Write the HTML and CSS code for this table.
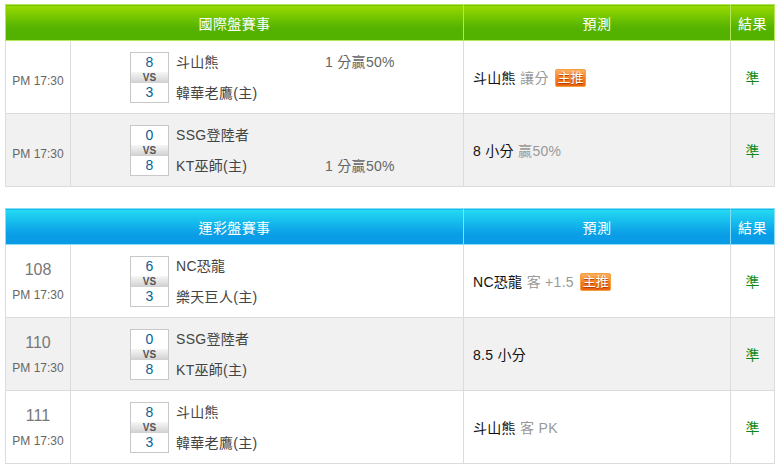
FILE: index.html
```html
<!DOCTYPE html>
<html lang="zh-Hant">
<head>
<meta charset="utf-8">
<title>賽事預測</title>
<link rel="stylesheet" href="styles.css">
</head>
<body>
<table class="board green">
  <colgroup><col class="c1"><col class="c2"><col class="c3"><col class="c4"></colgroup>
  <thead>
    <tr><th colspan="2">國際盤賽事</th><th>預測</th><th>結果</th></tr>
  </thead>
  <tbody>
    <tr>
      <td class="time"><div class="t">PM 17:30</div></td>
      <td class="match">
        <div class="mi">
          <div class="box"><div class="sc">8</div><div class="vs">VS</div><div class="sc">3</div></div>
          <div class="teams">
            <div class="line"><span class="team">斗山熊</span><span class="odds">1 分贏50%</span></div>
            <div class="line"><span class="team">韓華老鷹(主)</span><span class="odds"></span></div>
          </div>
        </div>
      </td>
      <td class="pred">斗山熊 <span class="g">讓分</span> <span class="badge">主推</span></td>
      <td class="res">準</td>
    </tr>
    <tr class="alt">
      <td class="time"><div class="t">PM 17:30</div></td>
      <td class="match">
        <div class="mi">
          <div class="box"><div class="sc">0</div><div class="vs">VS</div><div class="sc">8</div></div>
          <div class="teams">
            <div class="line"><span class="team">SSG登陸者</span><span class="odds"></span></div>
            <div class="line"><span class="team">KT巫師(主)</span><span class="odds">1 分贏50%</span></div>
          </div>
        </div>
      </td>
      <td class="pred">8 小分 <span class="g">贏50%</span></td>
      <td class="res">準</td>
    </tr>
  </tbody>
</table>

<table class="board blue">
  <colgroup><col class="c1"><col class="c2"><col class="c3"><col class="c4"></colgroup>
  <thead>
    <tr><th colspan="2">運彩盤賽事</th><th>預測</th><th>結果</th></tr>
  </thead>
  <tbody>
    <tr>
      <td class="time"><div class="num">108</div><div class="t">PM 17:30</div></td>
      <td class="match">
        <div class="mi">
          <div class="box"><div class="sc">6</div><div class="vs">VS</div><div class="sc">3</div></div>
          <div class="teams">
            <div class="line"><span class="team">NC恐龍</span><span class="odds"></span></div>
            <div class="line"><span class="team">樂天巨人(主)</span><span class="odds"></span></div>
          </div>
        </div>
      </td>
      <td class="pred">NC恐龍 <span class="g">客 +1.5</span> <span class="badge">主推</span></td>
      <td class="res">準</td>
    </tr>
    <tr class="alt">
      <td class="time"><div class="num">110</div><div class="t">PM 17:30</div></td>
      <td class="match">
        <div class="mi">
          <div class="box"><div class="sc">0</div><div class="vs">VS</div><div class="sc">8</div></div>
          <div class="teams">
            <div class="line"><span class="team">SSG登陸者</span><span class="odds"></span></div>
            <div class="line"><span class="team">KT巫師(主)</span><span class="odds"></span></div>
          </div>
        </div>
      </td>
      <td class="pred">8.5 小分</td>
      <td class="res">準</td>
    </tr>
    <tr>
      <td class="time"><div class="num">111</div><div class="t">PM 17:30</div></td>
      <td class="match">
        <div class="mi">
          <div class="box"><div class="sc">8</div><div class="vs">VS</div><div class="sc">3</div></div>
          <div class="teams">
            <div class="line"><span class="team">斗山熊</span><span class="odds"></span></div>
            <div class="line"><span class="team">韓華老鷹(主)</span><span class="odds"></span></div>
          </div>
        </div>
      </td>
      <td class="pred">斗山熊 <span class="g">客 PK</span></td>
      <td class="res">準</td>
    </tr>
  </tbody>
</table>
</body>
</html>
```

FILE: styles.css
```css
html, body {
  margin: 0;
  padding: 0;
  background: #fff;
}
body {
  padding: 4px 5px;
  font-family: "Liberation Sans", "Noto Sans CJK TC", sans-serif;
  font-size: 14px;
  color: #333;
}
.board {
  width: 769px;
  table-layout: fixed;
  border-collapse: collapse;
  margin-bottom: 21px;
}
.c1 { width: 65px; }
.c2 { width: 393px; }
.c3 { width: 267px; }
.c4 { width: 44px; }

.board th {
  height: 35px;
  padding: 0;
  font-weight: normal;
  font-size: 14px;
  letter-spacing: 0.4px;
  color: #fff;
  text-align: center;
  vertical-align: middle;
}
.green th {
  background: linear-gradient(#9ad900 0%, #6cc200 40%, #55b200 65%, #52b000 100%);
  border: 1px solid #b4e65a;
}
.blue th {
  background: linear-gradient(#24daf2 0%, #14b8ec 40%, #0a9ee7 70%, #0a9ae6 100%);
  border: 1px solid #86def6;
}
.board td {
  height: 72px;
  padding: 0;
  border: 1px solid #dcdcdc;
  vertical-align: middle;
}
.board tr.alt td {
  background: #f1f1f1;
}
.time {
  text-align: center;
  color: #666;
}
.time .t {
  font-size: 12px;
  padding-top: 8px;
}
.time .num {
  font-size: 16px;
  line-height: 18px;
  color: #777;
  margin-top: 1px;
  margin-bottom: -2px;
}
.time .num + .t {
  padding-top: 11px;
}
.mi {
  display: flex;
  align-items: center;
  padding-left: 59px;
}
.box {
  width: 37px;
  border: 1px solid #c8c8c8;
  background: #fff;
  text-align: center;
}
.sc {
  height: 19px;
  line-height: 19px;
  font-size: 14px;
  color: #0a5f96;
}
.vs {
  height: 11px;
  line-height: 11px;
  font-size: 10px;
  font-weight: bold;
  color: #555;
  background: linear-gradient(#f6f6f6, #e0e0e0 60%, #cfcfcf);
}
.teams {
  display: flex;
  flex-direction: column;
  gap: 11px;
  padding-left: 7px;
}
.line {
  display: flex;
  height: 20px;
  line-height: 20px;
  align-items: center;
}
.team {
  width: 149px;
  color: #444;
  letter-spacing: 0.3px;
}
.odds {
  color: #666;
  letter-spacing: 0.3px;
}
.pred {
  padding-left: 9px !important;
  color: #111;
  letter-spacing: 0.3px;
}
.g {
  color: #999;
}
.badge {
  display: inline-block;
  width: 29px;
  height: 16px;
  line-height: 16px;
  margin-left: 2px;
  font-size: 13px;
  text-align: center;
  color: #fff;
  letter-spacing: 0;
  text-shadow: 0 1px 1px #a33a00;
  background: linear-gradient(#ffb060, #f57a20 55%, #ec6210);
  border: 1px solid #f2a040;
  border-radius: 2px;
  vertical-align: 1px;
}
.res {
  text-align: center;
  color: #0a8a1a;
}
```
